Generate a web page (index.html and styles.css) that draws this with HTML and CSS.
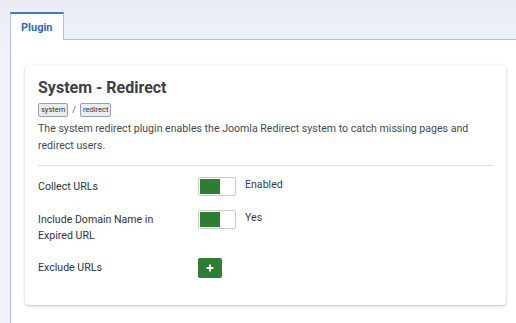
FILE: index.html
```html
<!DOCTYPE html>
<html lang="en">
<head>
    <meta charset="UTF-8">
    <title>Plugin: System - Redirect</title>
    <link rel="stylesheet" href="styles.css">
</head>
<body>
    <div class="tabs">
        <div class="tab-list">
            <button class="tab active">Plugin</button>
        </div>
        <div class="tab-panel">
            <div class="card">
                <h1 class="card-title">System - Redirect</h1>
                <div class="tags">
                    <span class="tag">system</span>
                    <span class="sep">/</span>
                    <span class="tag">redirect</span>
                </div>
                <p class="desc">The system redirect plugin enables the Joomla Redirect system to catch missing pages and redirect users.</p>
                <hr class="divider">

                <div class="field">
                    <label class="field-label">Collect URLs</label>
                    <div class="field-control">
                        <span class="switch"><span class="switch-on"></span></span>
                        <span class="switch-text">Enabled</span>
                    </div>
                </div>
                <div class="field">
                    <label class="field-label">Include Domain Name in Expired URL</label>
                    <div class="field-control">
                        <span class="switch"><span class="switch-on"></span></span>
                        <span class="switch-text">Yes</span>
                    </div>
                </div>
                <div class="field field-center">
                    <label class="field-label">Exclude URLs</label>
                    <div class="field-control">
                        <button class="add-btn">
                            <svg width="10" height="10" viewBox="0 0 10 10"><path d="M5 1.5v7M1.5 5h7" stroke="#fff" stroke-width="2"/></svg>
                        </button>
                    </div>
                </div>
            </div>
        </div>
    </div>
</body>
</html>
```

FILE: styles.css
```css
* {
    box-sizing: border-box;
}

body {
    margin: 0;
    font-family: Roboto, "Liberation Sans", sans-serif;
    color: #3b4048;
    background: linear-gradient(#e9edf3, #eef3fb 60px);
    height: 323px;
    overflow: hidden;
}

.tabs {
    padding-top: 12px;
    padding-left: 10px;
}

.tab-list {
    display: flex;
    border-bottom: 1px solid #aebfd6;
}

.tab {
    font-family: inherit;
    font-size: 11px;
    font-weight: 700;
    color: #2e6bb8;
    background: #fff;
    border: 1px solid #aebfd6;
    border-top: 2px solid #3f79c7;
    border-bottom: none;
    padding: 0 10px;
    height: 28px;
    margin-bottom: -1px;
    cursor: pointer;
}

.tab-panel {
    background: #fff;
    border-left: 1px solid #aebfd6;
    padding: 25px 10px 0 14px;
    height: 283px;
}

.card {
    background: #fff;
    border-radius: 4px;
    box-shadow: 0 1px 3px rgba(0, 0, 0, 0.25);
    padding: 13px 12px 27px 13px;
}

.card-title {
    margin: 0;
    font-size: 16px;
    font-weight: 700;
    line-height: 20px;
    color: #3c4047;
}

.tags {
    display: flex;
    align-items: center;
    gap: 4px;
    margin-top: 5px;
    font-size: 9px;
    color: #555;
}

.tag {
    border: 1px solid #9aa0a8;
    background: #e9ecef;
    border-radius: 2px;
    padding: 0 2px;
    line-height: 12px;
    font-size: 7.5px;
    color: #333;
}

.desc {
    margin: 3px 0 0;
    font-size: 10.6px;
    line-height: 17px;
    color: #454a52;
}

.divider {
    border: 0;
    border-top: 1px solid #dcdfe3;
    margin: 11px 0 0;
}

.field {
    display: flex;
    margin-top: 11px;
}

.field + .field {
    margin-top: 14px;
}

.field-label {
    width: 160px;
    padding-right: 28px;
    font-size: 10.6px;
    line-height: 16px;
    color: #2e3440;
    padding-top: 2px;
}

.field-center {
    align-items: center;
}

.field-center .field-label {
    padding-top: 0;
}

.field-control {
    display: flex;
    align-items: flex-start;
    gap: 9px;
}

.switch {
    display: block;
    width: 38px;
    height: 19px;
    border: 1px solid #c9cdd2;
    border-radius: 2px;
    background: #fff;
    padding: 1px;
}

.switch-on {
    display: block;
    width: 20px;
    height: 100%;
    background: #2f7d32;
}

.switch-text {
    font-size: 10.6px;
    line-height: 15px;
    color: #2e3a4e;
}

.add-btn {
    width: 24px;
    height: 20px;
    border: none;
    border-radius: 2px;
    background: #2f7d32;
    display: flex;
    align-items: center;
    justify-content: center;
    padding: 0;
    cursor: pointer;
}
```
